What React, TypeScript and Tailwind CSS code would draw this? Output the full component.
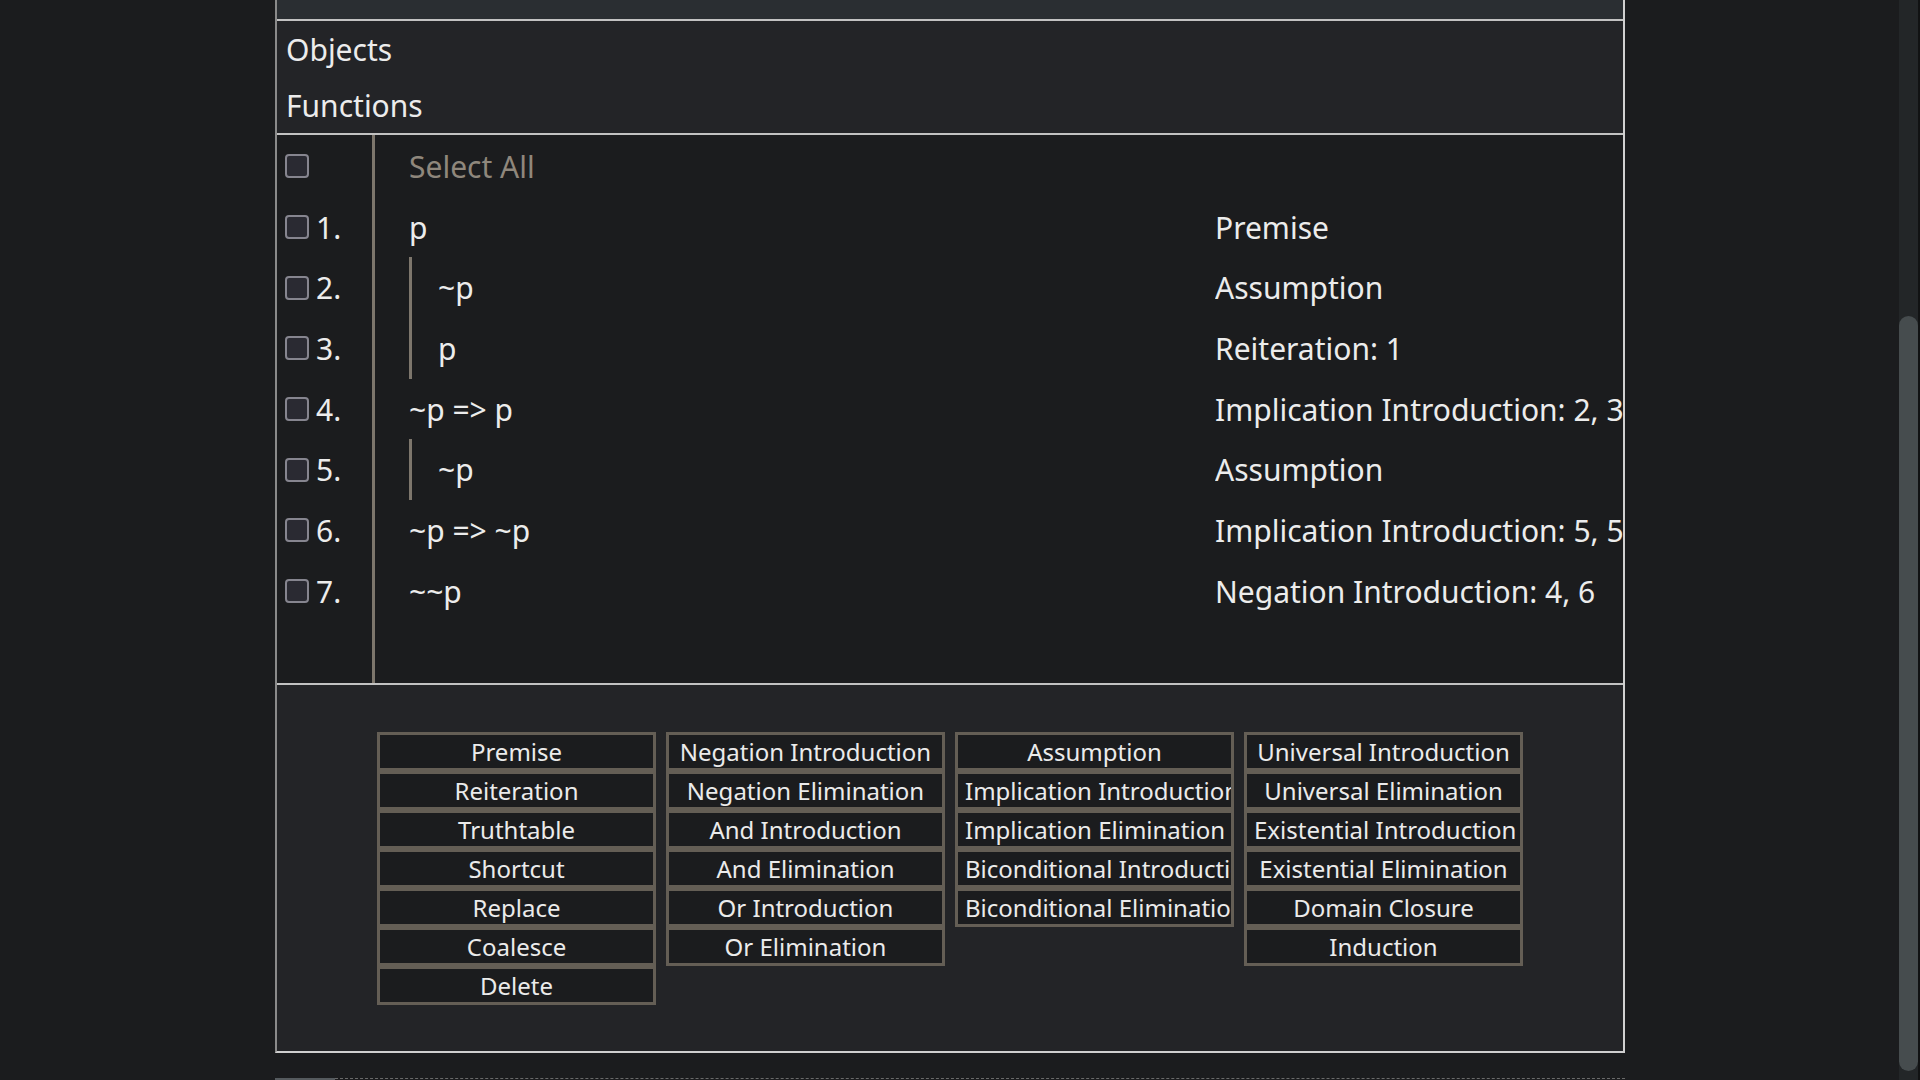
import type { ReactNode } from 'react'

interface Line {
  n: number
  formula: string
  just: string
  depth: number
}

const lines: Line[] = [
  { n: 1, formula: 'p', just: 'Premise', depth: 0 },
  { n: 2, formula: '~p', just: 'Assumption', depth: 1 },
  { n: 3, formula: 'p', just: 'Reiteration: 1', depth: 1 },
  { n: 4, formula: '~p => p', just: 'Implication Introduction: 2, 3', depth: 0 },
  { n: 5, formula: '~p', just: 'Assumption', depth: 1 },
  { n: 6, formula: '~p => ~p', just: 'Implication Introduction: 5, 5', depth: 0 },
  { n: 7, formula: '~~p', just: 'Negation Introduction: 4, 6', depth: 0 },
]

const columns: string[][] = [
  ['Premise', 'Reiteration', 'Truthtable', 'Shortcut', 'Replace', 'Coalesce', 'Delete'],
  [
    'Negation Introduction',
    'Negation Elimination',
    'And Introduction',
    'And Elimination',
    'Or Introduction',
    'Or Elimination',
  ],
  [
    'Assumption',
    'Implication Introduction',
    'Implication Elimination',
    'Biconditional Introduction',
    'Biconditional Elimination',
  ],
  [
    'Universal Introduction',
    'Universal Elimination',
    'Existential Introduction',
    'Existential Elimination',
    'Domain Closure',
    'Induction',
  ],
]

function Checkbox() {
  return (
    <span className="block w-[24px] h-[24px] shrink-0 rounded-[4px] border-2 border-[#86858f] bg-[#2a2a32]" />
  )
}

function Row({ children }: { children: ReactNode }) {
  return <div className="h-[60.7px] flex items-center">{children}</div>
}

function RuleButton({ label }: { label: string }) {
  // long labels start at the left and get cut at the right edge, like the original
  return (
    <button
      type="button"
      className="h-[39px] w-full flex items-center [justify-content:safe_center] overflow-hidden whitespace-nowrap px-[7px] border-[3px] border-[#645e55] bg-[#1b1c1e] text-[24px] leading-none text-[#ebebeb]"
    >
      {label}
    </button>
  )
}

export default function App() {
  return (
    <div
      className="w-[1920px] h-[1080px] overflow-hidden bg-[#1b1c1e] flex"
      style={{ fontFamily: '"Noto Sans", "Open Sans", sans-serif' }}
    >
      <div className="w-[275px] shrink-0" />

      <div className="w-[1350px] shrink-0 flex flex-col">
        <div className="w-full flex flex-col border-l-2 border-l-[#8a8a8a] border-r-2 border-r-[#d0d0d0] border-b-2 border-b-[#cfcfcf]">
          {/* top strip */}
          <div className="h-[19px] bg-[#2a2e32] border-b-2 border-[#c2c2c2] box-content" />

          {/* objects / functions */}
          <div className="h-[112px] bg-[#232427] border-b-2 border-[#c2c2c2] box-content flex flex-col text-[30px] text-[#ececec]">
            <div className="h-[56px] flex items-center pl-[9px]">Objects</div>
            <div className="h-[56px] flex items-center pl-[9px]">Functions</div>
          </div>

          {/* proof */}
          <div className="h-[548px] bg-[#1b1c1e] border-b-2 border-[#c2c2c2] box-content flex text-[30px] text-[#ececec]">
            <div className="w-[98px] shrink-0 border-r-[3px] border-[#7d766c] pt-[1px] flex flex-col">
              <Row>
                <span className="ml-[8px]">
                  <Checkbox />
                </span>
              </Row>
              {lines.map((l) => (
                <Row key={l.n}>
                  <span className="ml-[8px]">
                    <Checkbox />
                  </span>
                  <span className="ml-[7px]">{l.n}.</span>
                </Row>
              ))}
            </div>

            <div className="flex-1 min-w-0 pt-[1px] flex flex-col">
              <Row>
                <span className="pl-[34px] text-[#8f877c]">Select All</span>
              </Row>
              {lines.map((l) => (
                <div key={l.n} className="h-[60.7px] flex">
                  <div className="w-[840px] shrink-0 pl-[34px] flex">
                    {l.depth > 0 ? (
                      <div className="flex h-full">
                        <div className="w-[3px] bg-[#7d766c]" />
                        <span className="pl-[26px] flex items-center">{l.formula}</span>
                      </div>
                    ) : (
                      <span className="flex items-center">{l.formula}</span>
                    )}
                  </div>
                  <div className="flex-1 min-w-0 overflow-hidden whitespace-nowrap flex items-center">
                    {l.just}
                  </div>
                </div>
              ))}
            </div>
          </div>

          {/* rule buttons */}
          <div className="h-[366px] bg-[#232427] pt-[47px] flex justify-center gap-[10px]">
            {columns.map((col, i) => (
              <div key={i} className="w-[279px] flex flex-col">
                {col.map((label) => (
                  <RuleButton key={label} label={label} />
                ))}
              </div>
            ))}
          </div>
        </div>

        <div className="flex-1" />
        <div className="h-[2px] flex">
          <div className="w-[60px] bg-[#555a5e]" />
          <div className="flex-1 border-t border-dashed border-[#6a6a6a]" />
        </div>
      </div>

      <div className="flex-1" />

      {/* page scrollbar */}
      <div className="w-[19px] shrink-0 bg-[#232628] flex flex-col pt-[316px] pb-[9px]">
        <div className="flex-1 rounded-full bg-[#464c4e]" />
      </div>
      <div className="w-[2px] shrink-0 bg-[#111213]" />
    </div>
  )
}
